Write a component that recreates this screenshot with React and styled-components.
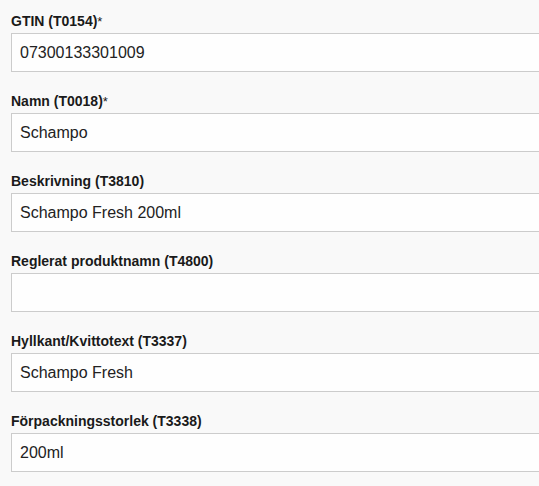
import React from "react";
import styled, { createGlobalStyle } from "styled-components";

const GlobalStyle = createGlobalStyle`
  html, body {
    margin: 0;
    padding: 0;
    overflow: hidden;
    background: #f9f9f9;
  }
  body {
    font-family: "Liberation Sans", Arial, sans-serif;
    color: #222;
  }
`;

// input runs a little past the right edge, as in the original page
const Form = styled.div`
  width: 540px;
  padding: 12px 0 0 11px;
  display: flex;
  flex-direction: column;
  gap: 20px;
`;

const Field = styled.div`
  display: flex;
  flex-direction: column;
  gap: 3px;
`;

const Label = styled.label`
  display: block;
  height: 18px;
  font-size: 14px;
  line-height: 18px;
  font-weight: bold;
  color: #1a1a1a;
  white-space: nowrap;
`;

const Required = styled.span`
  font-weight: normal;
  font-size: 13px;
  line-height: 0;
`;

const Input = styled.input`
  box-sizing: border-box;
  width: 100%;
  height: 39px;
  padding: 0 8px;
  border: 1px solid #cccccc;
  border-radius: 0;
  background: #fefefe;
  font-family: "Liberation Sans", Arial, sans-serif;
  font-size: 16px;
  color: #222;
  outline: none;
`;

const fields = [
  { label: "GTIN (T0154)", required: true, value: "07300133301009" },
  { label: "Namn (T0018)", required: true, value: "Schampo" },
  { label: "Beskrivning (T3810)", value: "Schampo Fresh 200ml" },
  { label: "Reglerat produktnamn (T4800)", value: "" },
  { label: "Hyllkant/Kvittotext (T3337)", value: "Schampo Fresh" },
  { label: "Förpackningsstorlek (T3338)", value: "200ml" },
];

const App = () => {
  return (
    <>
      <GlobalStyle />
      <Form>
        {fields.map((f) => (
          <Field key={f.label}>
            <Label>
              {f.label}
              {f.required && <Required>*</Required>}
            </Label>
            <Input defaultValue={f.value} readOnly />
          </Field>
        ))}
      </Form>
    </>
  );
};

export default App;
